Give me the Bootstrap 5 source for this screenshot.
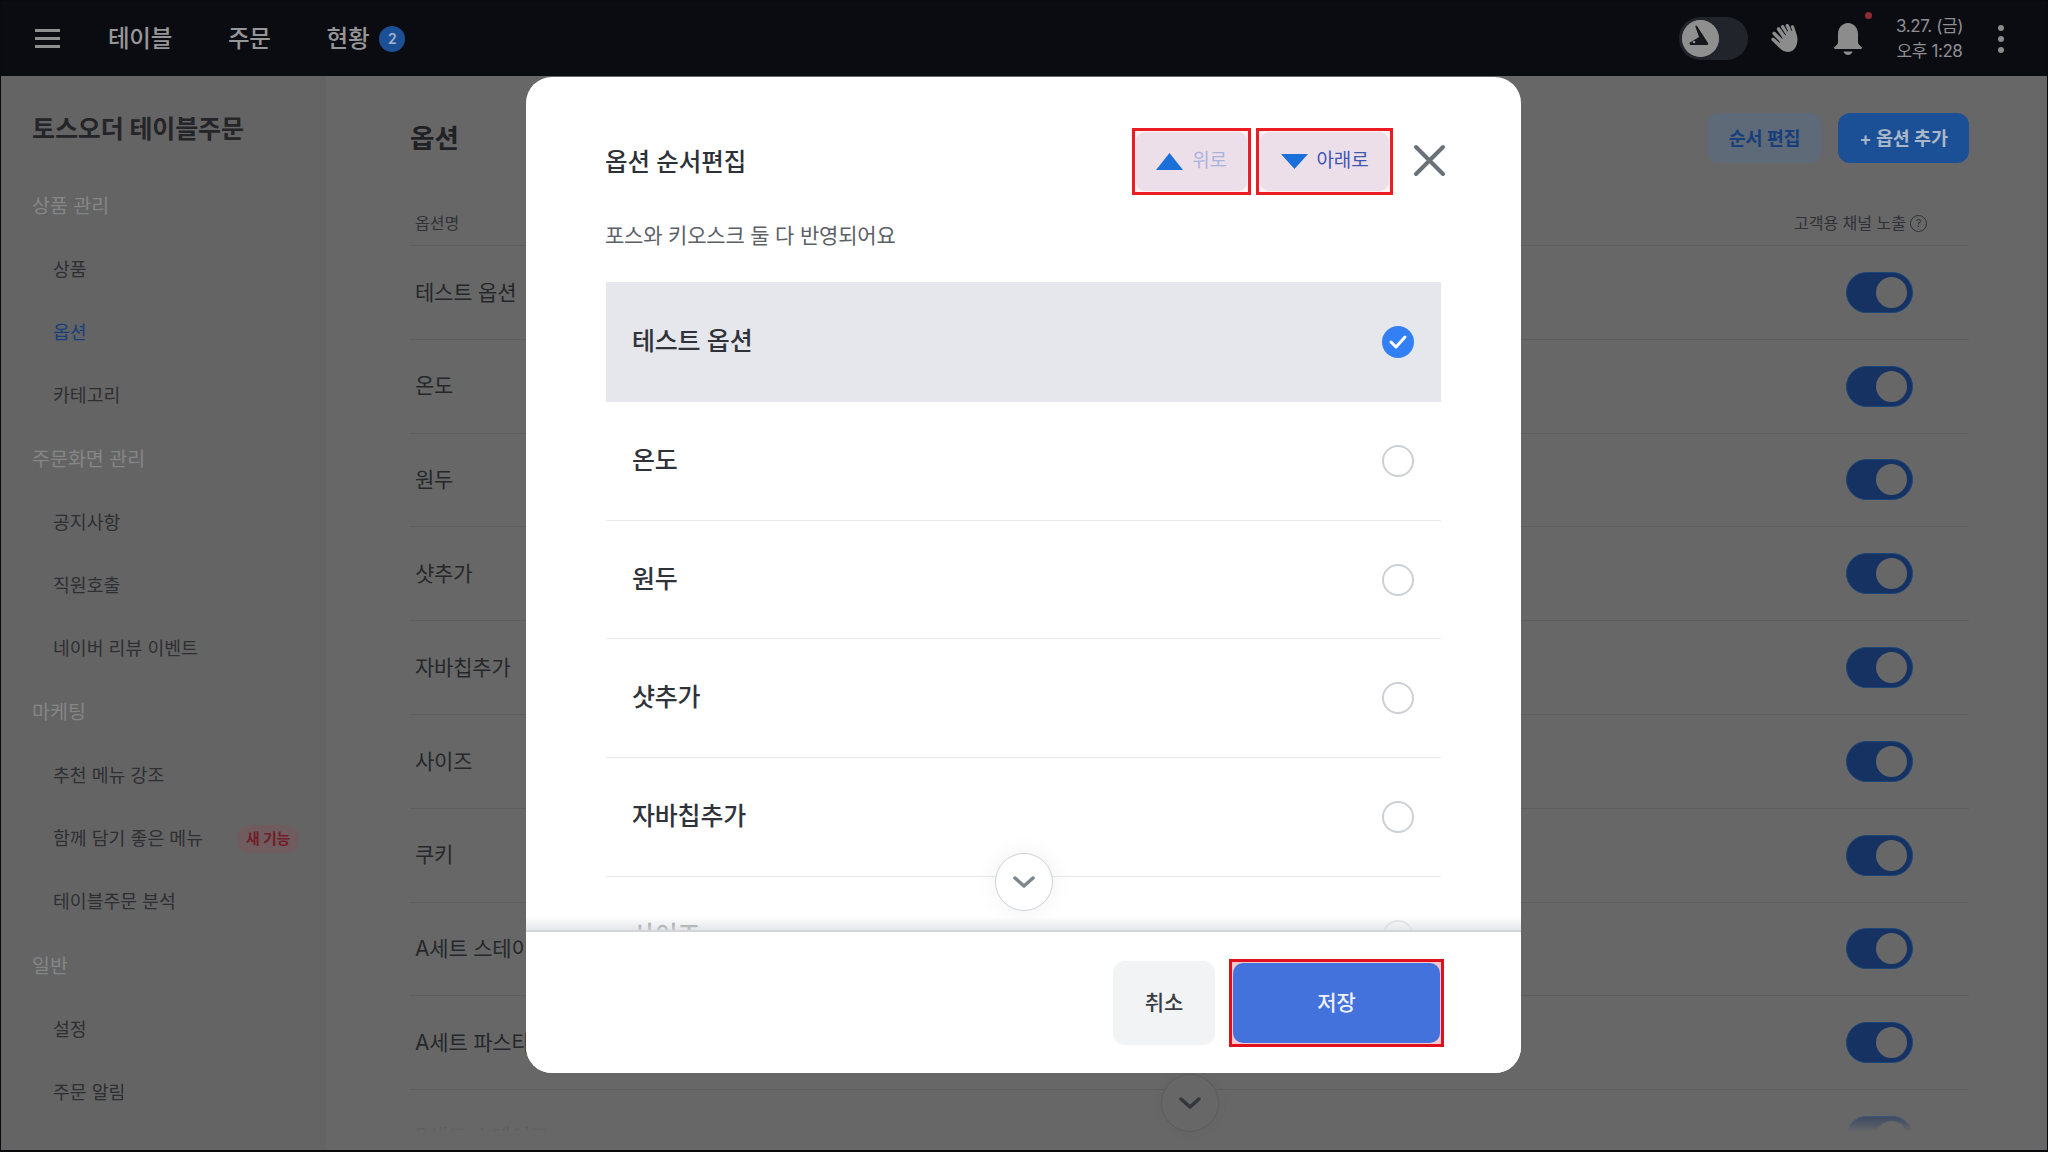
<!doctype html>
<html lang="ko">
<head>
<meta charset="utf-8">
<title>옵션 순서편집</title>
<link href="https://cdn.jsdelivr.net/npm/bootstrap@5.3.0/dist/css/bootstrap.min.css" rel="stylesheet">
<style>
html,body{height:100%;margin:0;overflow:hidden}
body{font-family:Inter,"Noto Sans CJK KR",sans-serif;background:#676767;color:#2a2b2e}
.frame{width:2048px;height:1152px;border:1px solid #0a0a0c;border-bottom-width:2px;position:relative;overflow:hidden;background:#676767}
.topbar{height:75px;background:#0b0c12;color:#9c9c9e;padding:0 43px 0 34px;flex:none}
.burger{width:25px;height:19px;border-top:3px solid #8f8f8f;border-bottom:3px solid #8f8f8f;position:relative;margin-right:48px}
.burger::after{content:"";position:absolute;left:0;right:0;top:5px;height:3px;background:#8f8f8f}
.topnav{font-size:23.500px;font-weight:500;letter-spacing:-.3px;margin-right:56px;line-height:1;color:#969698}
.topcount{width:26px;height:26px;border-radius:50%;background:#1b5096;color:#a3b5cc;font-size:14px;font-weight:600;margin-left:10px}
.shift{width:69px;height:43px;border-radius:22px;background:#22242b;padding:3px;margin-right:21px}
.shiftknob{width:37px;height:37px;border-radius:50%;background:#8f8f8f;display:block}
.hand{width:30px;height:30px;margin-right:34px}
.bellbox{width:30px;height:34px;position:relative;margin-right:33px}
.belldot{position:absolute;width:7px;height:7px;border-radius:50%;background:#8f2a33;right:-9px;top:-10px}
.clock{font-size:17px;line-height:25px;text-align:center;color:#8f8f91;letter-spacing:-.4px;width:68px;margin-right:34.500px}
.dots{width:6px;display:flex;flex-direction:column;gap:5px}
.dots i{width:6px;height:6px;border-radius:50%;background:#8c8c8c}
.side{width:325px;background:#646464;padding:36px 20px 0 31px;flex:none;height:1075px}
.sidetitle{font-size:25px;font-weight:700;color:#242528;line-height:34px;letter-spacing:-.1px;margin-bottom:29px}
.sidehead{font-size:19.500px;color:#858687;height:63px;display:flex;align-items:center;margin-top:1.300px}
.sidehead:first-of-type{margin-top:0}
.sideitem{font-size:18.300px;color:#2e2f33;height:63px;padding-left:21px;display:flex;align-items:center}
.sideitem.on{color:#173f7c}
.newtag{background:#705c5e;color:#701d29;font-size:15px;font-weight:600;border-radius:14px;width:62px;height:28px;margin-left:34px;letter-spacing:-.3px}
.mainarea{padding:37px 78px 0 84px;flex:1;position:relative;min-width:0}
.maintitle{font-size:26.500px;font-weight:700;color:#202124;line-height:50px}
.btnsoft,.btnfill{height:50px;border-radius:12px;font-size:18.500px;font-weight:600;border:0;padding:0;line-height:50px;letter-spacing:-.2px}
.btnsoft{width:115px;background:#5f6a78;color:#173f7c;margin-right:16px}
.btnfill{width:131px;background:#1b5096;color:#a9b7c9}
.theadrow{height:76px;border-bottom:1px solid #5e5e5e;font-size:16px;color:#303135;padding:0 42px 10px 5px;margin-top:7px}
.qmark{width:17px;height:17px;border-radius:50%;border:1px solid #303135;font-size:11px;line-height:15px;text-align:center;margin-left:4px;display:inline-block}
.trow{height:93.800px;border-bottom:1px solid #5e5e5e;font-size:21px;color:#26272a;padding:0 56px 0 5px;white-space:nowrap;letter-spacing:-.2px}
.swt{width:67px;height:41px;border-radius:21px;background:#153263;padding:4px 4px 4px 29px;flex:none;border:1px solid #1b4478}
.swt i{display:block;width:31px;height:31px;border-radius:50%;background:#676767}
.fadebottom{position:absolute;left:0;right:0;bottom:0;height:47px;background:linear-gradient(to bottom,rgba(103,103,103,0),#676767 62%)}
.under{position:absolute;left:1160px;top:1073px;width:58px;height:58px;border-radius:50%;border:1px solid #5b5b5b;background:#676767;box-shadow:0 0 14px rgba(0,0,0,.04)}
.veil{position:absolute;inset:0}
.sheet{position:absolute;left:525px;top:76px;width:995px;height:996px;background:#fff;border-radius:26px;overflow:hidden;color:#2b2f36}
.sheethead{height:150px;padding:67px 0 0 79px;position:relative}
.sheettitle{font-size:24.500px;font-weight:500;line-height:36px;letter-spacing:-.1px;color:#2d3138}
.movegroup{position:absolute;top:51px;left:606px;gap:5px}
.redbox{border:3px solid #ec1c24;padding:1px;background:#fdf1f2;height:67px}
.movebtn{height:100%;width:100%;border:0;border-radius:9px;background:#ecdfea;padding:0;font-size:19px;letter-spacing:-.2px;color:#3d56b0;gap:9px}
.boxup{width:119px}
.boxdn{width:137px}
.movebtn.up{color:#a9b3dc}
.closex{position:absolute;left:887px;top:67px;width:33px;height:33px;border:0;background:none;padding:0}
.sheetsub{font-size:21px;color:#5c6167;line-height:30px;padding-left:79px;height:30px;letter-spacing:-.2px;margin-top:-6px}
.listwrap{height:648px;overflow:hidden;position:relative;margin-top:31px;margin-bottom:0}
.opt{height:118.700px;border-bottom:1px solid #e7e9ec;margin:0 80px;padding:0 27px 0 26px;font-size:25px;font-weight:500;color:#2f3339;letter-spacing:-.2px;background:#fff}
.opt.on{background:#e5e7ec;border-bottom:0;height:120px}
.tick{width:32px;height:32px;border-radius:50%;flex:none}
.ring{border:2px solid #ccd0d5}
.tick.fill{background:#3280f4}
.listfade{position:absolute;left:0;right:0;bottom:0;height:30px;background:linear-gradient(to bottom,rgba(255,255,255,0),rgba(255,255,255,.45) 55%,rgba(224,226,230,.85) 100%);pointer-events:none}
.circdown{position:absolute;left:469px;top:776px;width:58px;height:58px;border-radius:50%;background:#fff;border:1px solid #cfd3d8;box-shadow:0 0 24px rgba(0,0,0,.06)}
.sheetfoot{height:143px;border-top:2px solid #d3d5d9;position:relative;background:#fff}
.cancelbtn{position:absolute;left:587px;top:29px;width:102px;height:84px;border:0;padding:0;font-size:21px;font-weight:500;background:#f2f3f5;border-radius:12px;color:#3a3e44}
.savebox{position:absolute;left:703px;top:27px;width:215px;height:88px;border:3px solid #e0101c;padding:1px;background:#f3c9cf}
.savebtn{display:block;width:100%;height:100%;border:0;padding:0;font-size:21px;font-weight:500;background:#4472dc;color:#eef1f9;border-radius:10px}
</style>
</head>
<body>
<div class="frame d-flex flex-column">
  <header class="topbar d-flex align-items-center">
    <div class="burger"></div>
    <div class="topnav">테이블</div>
    <div class="topnav">주문</div>
    <div class="topnav d-flex align-items-center" style="margin-right:0">현황<span class="topcount d-flex align-items-center justify-content-center">2</span></div>
    <div class="flex-grow-1"></div>
    <div class="shift">
      <svg class="shiftknob" viewBox="0 0 37 37"><circle cx="18.500" cy="18.500" r="18.500" fill="#8f8f8f"/><path d="M15 6l11 17c.5 1 0 2-1 2H9c-1.500 0-2-1.500-1-2.500l9-5.500-3.500-10c-.5-1.500.7-2.200 1.500-1z" fill="#15171d"/><circle cx="12" cy="22" r="1.300" fill="#8f8f8f"/></svg>
    </div>
    <svg class="hand" viewBox="0 0 30 30"><path fill="#8c8c8c" d="M12.500 1.500c1-.8 2.200-.3 2.800.8l3 5.200.7-.4-2.200-4.600c-.5-1.100-.1-2.200.9-2.500 1-.3 1.900.3 2.400 1.300l2.500 5.600.7-.3-1.300-3c-.4-1.100 0-2 .9-2.300 1-.3 1.800.3 2.200 1.300l2.400 7.500c1 3.200 1.400 5.700.6 8.700C27.300 24 23.800 28 19 28c-4 0-7-2.200-9.800-5.200L3 16.800c-.9-.9-.9-2 0-2.700.8-.7 1.900-.5 2.700.3l4.800 4.400.6-.6L4 10.800c-.8-.9-.8-2 0-2.700.9-.7 2-.5 2.800.4l6.300 6.300.6-.5L8.300 6.200c-.7-1-.6-2.100.3-2.700.9-.6 2-.3 2.700.7l5 7 .6-.4-4.700-7.300c-.5-.8-.4-1.500.3-2z"/></svg>
    <div class="bellbox">
      <svg viewBox="0 0 30 34" width="30" height="34" class="d-block"><path fill="#8c8c8c" d="M15 1C9 1 5 6 5 12v8c0 2-1.500 3.500-3.500 5-.8.700-.5 2 .7 2h25.600c1.200 0 1.500-1.300.7-2-2-1.500-3.500-3-3.500-5v-8C25 6 21 1 15 1z"/><path fill="#8c8c8c" d="M10.500 29.500h9c-.6 2.300-2.300 3.500-4.500 3.500s-3.900-1.200-4.500-3.500z"/></svg>
      <span class="belldot"></span>
    </div>
    <div class="clock"><div>3.27. (금)</div><div>오후 1:28</div></div>
    <div class="dots"><i></i><i></i><i></i></div>
  </header>
  <div class="d-flex flex-grow-1" style="min-height:0">
    <nav class="side">
      <div class="sidetitle">토스오더 테이블주문</div>
      <div class="sidehead">상품 관리</div>
      <div class="sideitem">상품</div>
      <div class="sideitem on">옵션</div>
      <div class="sideitem">카테고리</div>
      <div class="sidehead">주문화면 관리</div>
      <div class="sideitem">공지사항</div>
      <div class="sideitem">직원호출</div>
      <div class="sideitem">네이버 리뷰 이벤트</div>
      <div class="sidehead">마케팅</div>
      <div class="sideitem">추천 메뉴 강조</div>
      <div class="sideitem">함께 담기 좋은 메뉴<span class="newtag d-flex align-items-center justify-content-center">새 기능</span></div>
      <div class="sideitem">테이블주문 분석</div>
      <div class="sidehead">일반</div>
      <div class="sideitem">설정</div>
      <div class="sideitem">주문 알림</div>
    </nav>
    <main class="mainarea">
      <div class="d-flex align-items-center justify-content-between">
        <div class="maintitle">옵션</div>
        <div class="d-flex"><button class="btnsoft">순서 편집</button><button class="btnfill">+ 옵션 추가</button></div>
      </div>
      <div class="theadrow d-flex align-items-end justify-content-between">
        <span>옵션명</span><span class="d-flex align-items-center">고객용 채널 노출<span class="qmark">?</span></span>
      </div>
      <div class="trow d-flex align-items-center justify-content-between"><span>테스트 옵션</span><span class="swt"><i></i></span></div>
      <div class="trow d-flex align-items-center justify-content-between"><span>온도</span><span class="swt"><i></i></span></div>
      <div class="trow d-flex align-items-center justify-content-between"><span>원두</span><span class="swt"><i></i></span></div>
      <div class="trow d-flex align-items-center justify-content-between"><span>샷추가</span><span class="swt"><i></i></span></div>
      <div class="trow d-flex align-items-center justify-content-between"><span>자바칩추가</span><span class="swt"><i></i></span></div>
      <div class="trow d-flex align-items-center justify-content-between"><span>사이즈</span><span class="swt"><i></i></span></div>
      <div class="trow d-flex align-items-center justify-content-between"><span>쿠키</span><span class="swt"><i></i></span></div>
      <div class="trow d-flex align-items-center justify-content-between"><span>A세트 스테이크</span><span class="swt"><i></i></span></div>
      <div class="trow d-flex align-items-center justify-content-between"><span>A세트 파스타</span><span class="swt"><i></i></span></div>
      <div class="trow d-flex align-items-center justify-content-between"><span>B세트 스테이크</span><span class="swt"><i></i></span></div>
      <div class="fadebottom"></div>
    </main>
  </div>
  <div class="veil">
    <div class="under d-flex align-items-center justify-content-center">
      <svg width="24" height="14" viewBox="0 0 24 14"><path d="M3 3l9 8 9-8" fill="none" stroke="#33363b" stroke-width="3.500" stroke-linecap="round" stroke-linejoin="round"/></svg>
    </div>
    <section class="sheet">
      <div class="sheethead">
        <div class="sheettitle">옵션 순서편집</div>
        <div class="movegroup d-flex">
          <div class="redbox boxup"><button class="movebtn up d-flex align-items-center justify-content-center">
            <svg width="27" height="17" viewBox="0 0 27 17"><path d="M13.500 0L27 17H0z" fill="#1b6fd8"/></svg><span>위로</span>
          </button></div>
          <div class="redbox boxdn"><button class="movebtn dn d-flex align-items-center justify-content-center">
            <svg width="27" height="15" viewBox="0 0 27 15"><path d="M0 0h27L13.500 15z" fill="#1b6fd8"/></svg><span>아래로</span>
          </button></div>
        </div>
        <button class="closex" aria-label="닫기"><svg width="33" height="33" viewBox="0 0 33 33" class="d-block"><path d="M3 3l27 27M30 3L3 30" stroke="#6a7178" stroke-width="4" stroke-linecap="round"/></svg></button>
      </div>
      <div class="sheetsub">포스와 키오스크 둘 다 반영되어요</div>
      <div class="listwrap">
        <div class="opt on d-flex align-items-center justify-content-between"><span>테스트 옵션</span><span class="tick fill d-flex align-items-center justify-content-center"><svg width="20" height="16" viewBox="0 0 20 16"><path d="M3 8l5 5 9-10" fill="none" stroke="#fff" stroke-width="3" stroke-linecap="round" stroke-linejoin="round"/></svg></span></div>
        <div class="opt d-flex align-items-center justify-content-between"><span>온도</span><span class="tick ring"></span></div>
        <div class="opt d-flex align-items-center justify-content-between"><span>원두</span><span class="tick ring"></span></div>
        <div class="opt d-flex align-items-center justify-content-between"><span>샷추가</span><span class="tick ring"></span></div>
        <div class="opt d-flex align-items-center justify-content-between"><span>자바칩추가</span><span class="tick ring"></span></div>
        <div class="opt d-flex align-items-center justify-content-between"><span>사이즈</span><span class="tick ring"></span></div>
        <div class="listfade"></div>
      </div>
      <div class="circdown d-flex align-items-center justify-content-center">
        <svg width="24" height="14" viewBox="0 0 24 14"><path d="M3 3l9 8 9-8" fill="none" stroke="#7f868e" stroke-width="3.500" stroke-linecap="round" stroke-linejoin="round"/></svg>
      </div>
      <div class="sheetfoot">
        <button class="cancelbtn">취소</button>
        <div class="savebox"><button class="savebtn">저장</button></div>
      </div>
    </section>
  </div>
</div>
<script src="https://cdn.jsdelivr.net/npm/bootstrap@5.3.0/dist/js/bootstrap.bundle.min.js"></script>
</body>
</html>
